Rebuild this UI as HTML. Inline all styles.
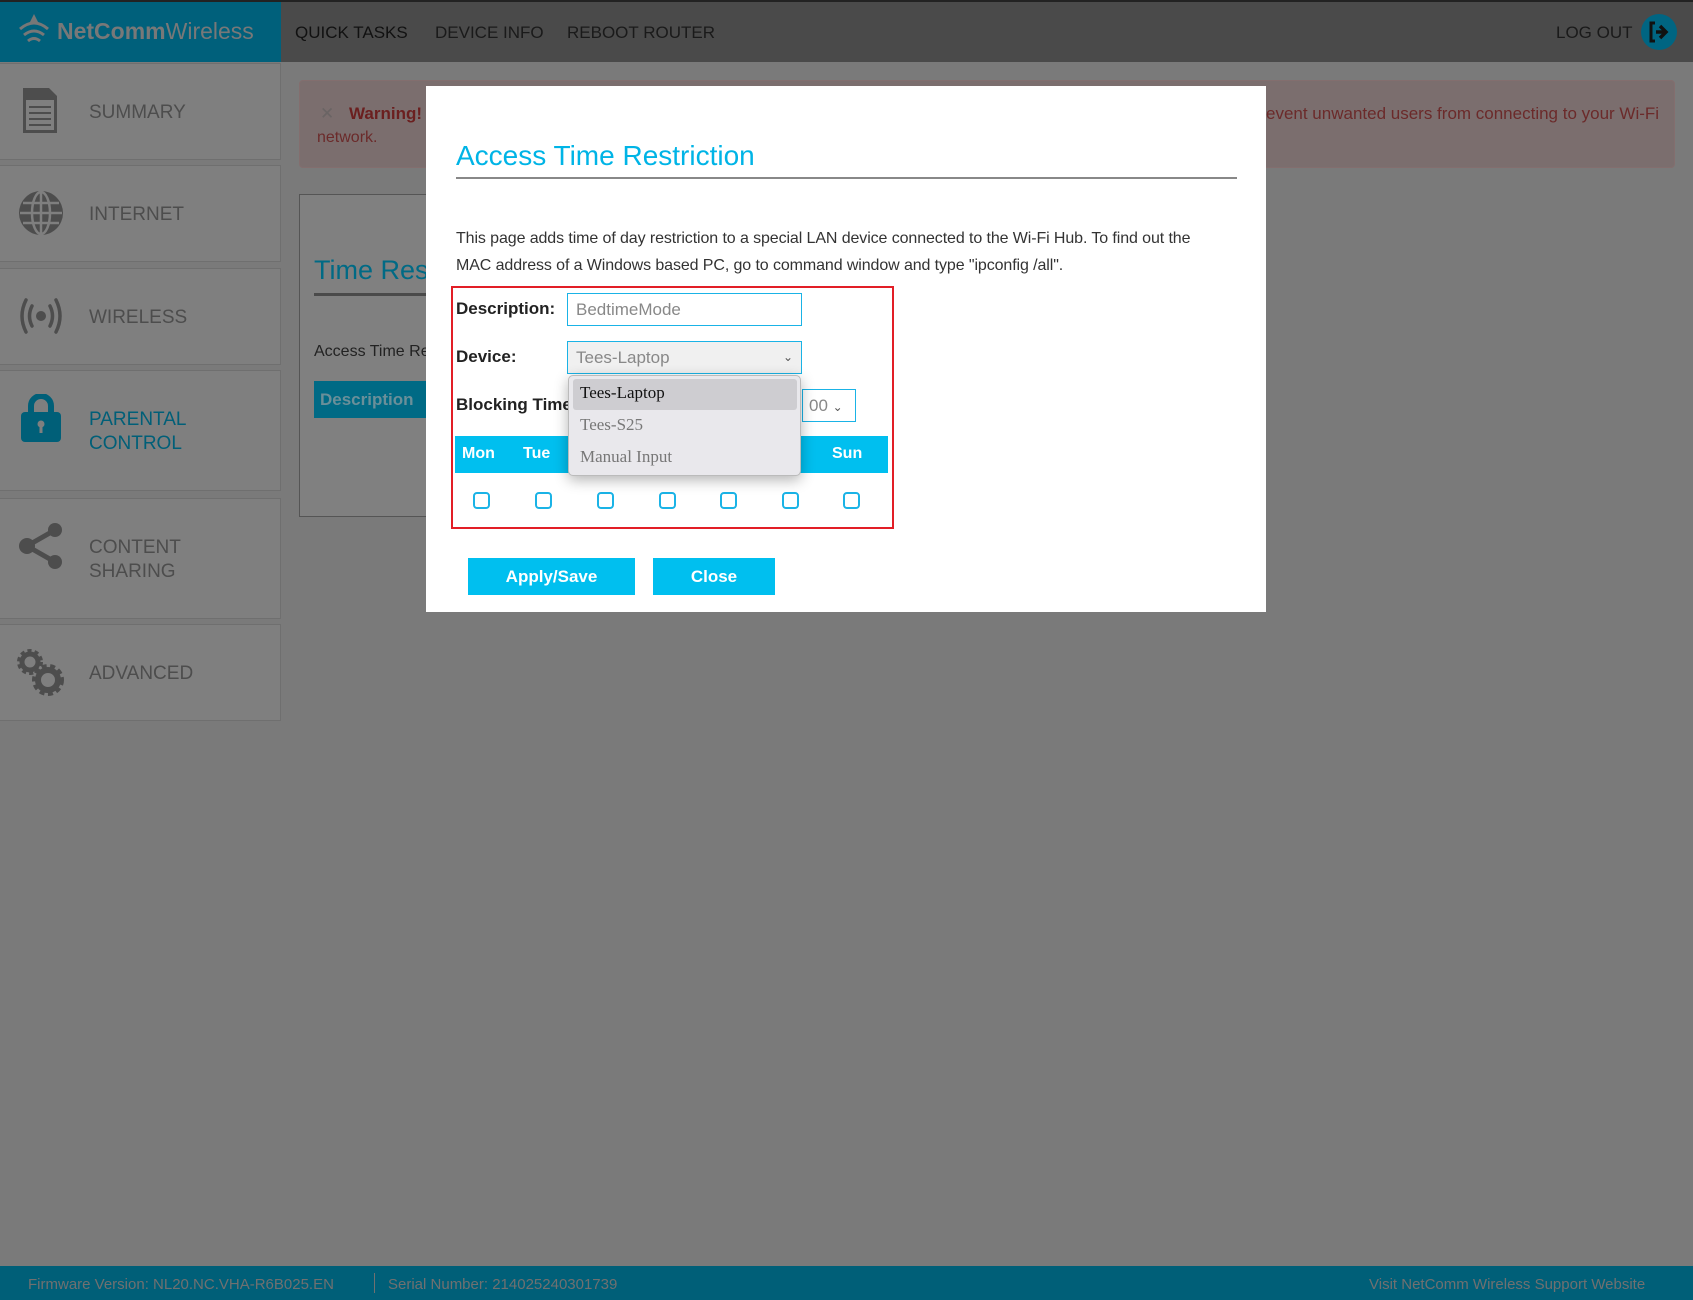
<!DOCTYPE html>
<html><head><meta charset="utf-8"><style>
*{box-sizing:border-box;margin:0;padding:0}
body{width:1693px;height:1300px;background:#7a7a7a;font-family:"Liberation Sans",sans-serif;position:relative;overflow:hidden}
.a{position:absolute}
.side{left:0;width:281px;background:#7f7f7f;border:1px solid #6f6f6f;border-left:none}
.side span{position:absolute;left:89px;font-size:19px;color:#4d4d4d;line-height:24px}
.day{position:absolute;top:0;color:#fff;font-weight:bold;font-size:16px;line-height:36px}
.cb{position:absolute;top:492px;width:17px;height:17px;border:2px solid #1ab3e6;border-radius:4px}
.btn{position:absolute;top:558px;height:37px;background:#00bfef;color:#fff;font-weight:bold;font-size:17px;text-align:center;line-height:37px}
</style></head><body>
<div class="a" style="left:0;top:0;width:1693px;height:2px;background:#222"></div>
<div class="a" style="left:0;top:2px;width:1693px;height:60px;background:#4a4a4a"></div>
<div class="a" style="left:0;top:2px;width:281px;height:60px;background:#00607b"></div>
<svg class="a" style="left:16px;top:13px" width="36" height="34" viewBox="0 0 36 34"><g fill="none" stroke="#777" stroke-width="3"><path d="M4 16 Q18 4 32 16"/><path d="M8 22 Q18 14 28 22"/><path d="M12 28 Q18 23 24 28"/></g><path d="M18 1 L14 9 H22Z" fill="#777"/></svg>
<div class="a" style="left:57px;top:17px;font-size:23px;color:#787878;line-height:28px"><b>NetComm</b>Wireless</div>
<div class="a" style="left:295px;top:22px;font-size:17px;color:#111;line-height:22px">QUICK TASKS</div>
<div class="a" style="left:435px;top:22px;font-size:17px;color:#1a1a1a;line-height:22px">DEVICE INFO</div>
<div class="a" style="left:567px;top:22px;font-size:17px;color:#1a1a1a;line-height:22px">REBOOT ROUTER</div>
<div class="a" style="left:1556px;top:22px;font-size:17px;color:#1a1a1a;line-height:22px">LOG OUT</div>
<div class="a" style="left:1641px;top:14px;width:36px;height:36px;border-radius:50%;background:#006582"></div>
<svg class="a" style="left:1647px;top:20px" width="24" height="24" viewBox="0 0 24 24"><path d="M8 3H4v18h4" fill="none" stroke="#111" stroke-width="3"/><path d="M9 12h8M13 6l6 6-6 6" fill="none" stroke="#111" stroke-width="3.5"/></svg>

<div class="a side" style="top:63px;height:97px"><span style="top:37px">SUMMARY</span></div>
<svg class="a" style="left:20px;top:86px" width="40" height="50" viewBox="0 0 40 50"><path d="M3 2h26l8 8v37H3z" fill="#4d4d4d"/><path d="M6 14h28v30H6z" fill="#7f7f7f"/><g stroke="#4d4d4d" stroke-width="2"><path d="M9 21h22M9 27h22M9 33h22M9 39h22"/></g></svg>
<div class="a side" style="top:165px;height:97px"><span style="top:37px">INTERNET</span></div>
<svg class="a" style="left:17px;top:189px" width="48" height="48" viewBox="0 0 48 48"><circle cx="24" cy="24" r="22" fill="#4d4d4d"/><g fill="none" stroke="#7f7f7f" stroke-width="2.5"><ellipse cx="24" cy="24" rx="9" ry="21"/><path d="M24 3v42M3 24h42M6 14h36M6 34h36"/></g></svg>
<div class="a side" style="top:268px;height:97px"><span style="top:37px">WIRELESS</span></div>
<svg class="a" style="left:17px;top:296px" width="48" height="40" viewBox="0 0 48 40"><circle cx="24" cy="20" r="5" fill="#4d4d4d"/><g fill="none" stroke="#4d4d4d" stroke-width="3.5" stroke-linecap="round"><path d="M15 10 Q10 20 15 30M33 10 Q38 20 33 30M9 4 Q1 20 9 36M39 4 Q47 20 39 36"/></g></svg>
<div class="a side" style="top:370px;height:121px"><span style="top:37px;color:#005f78">PARENTAL<br>CONTROL</span></div>
<svg class="a" style="left:20px;top:394px" width="42" height="50" viewBox="0 0 42 50"><path d="M11 20V12a10 10 0 0 1 20 0v8" fill="none" stroke="#005f78" stroke-width="6"/><rect x="1" y="18" width="40" height="30" rx="4" fill="#005f78"/><circle cx="21" cy="30" r="3.5" fill="#7f7f7f"/><rect x="19.5" y="30" width="3" height="9" fill="#7f7f7f"/></svg>
<div class="a side" style="top:498px;height:121px"><span style="top:37px">CONTENT<br>SHARING</span></div>
<svg class="a" style="left:17px;top:521px" width="48" height="50" viewBox="0 0 48 50"><g stroke="#4d4d4d" stroke-width="5"><path d="M10 25L38 9M10 25L38 41"/></g><circle cx="10" cy="25" r="8" fill="#4d4d4d"/><circle cx="38" cy="9" r="7" fill="#4d4d4d"/><circle cx="38" cy="41" r="7" fill="#4d4d4d"/></svg>
<div class="a side" style="top:624px;height:97px"><span style="top:37px">ADVANCED</span></div>
<svg class="a" style="left:16px;top:648px" width="50" height="50" viewBox="0 0 50 50"><g fill="none" stroke="#4d4d4d"><circle cx="14" cy="14" r="8" stroke-width="5"/><circle cx="14" cy="14" r="11" stroke-width="4" stroke-dasharray="4 3"/><circle cx="32" cy="32" r="10" stroke-width="6"/><circle cx="32" cy="32" r="14" stroke-width="4" stroke-dasharray="5 3.5"/></g></svg>

<div class="a" style="left:299px;top:80px;width:1376px;height:88px;background:#7b6e6e;border:1px solid #836e6e;border-radius:4px"></div>
<div class="a" style="left:320px;top:104px;font-size:17px;color:#6a6464">✕</div>
<div class="a" style="left:349px;top:104px;font-size:17px;color:#6b1f1f;font-weight:bold">Warning!</div>
<div class="a" style="left:1266px;top:104px;font-size:17px;color:#6b2a2a">event unwanted users from connecting to your Wi-Fi</div>
<div class="a" style="left:317px;top:129px;font-size:16px;color:#6b2a2a">network.</div>

<div class="a" style="left:299px;top:194px;width:140px;height:323px;background:#808080;border:1px solid #555"></div>
<div class="a" style="left:314px;top:255px;font-size:27px;color:#006a85">Time Rest</div>
<div class="a" style="left:314px;top:293px;width:130px;height:3px;background:#4a4a4a"></div>
<div class="a" style="left:314px;top:343px;font-size:16px;color:#222">Access Time Re</div>
<div class="a" style="left:314px;top:381px;width:130px;height:37px;background:#006a85;color:#6a8f99;font-size:17px;line-height:37px;padding-left:6px;font-weight:bold">Description</div>

<div class="a" style="left:0;top:1266px;width:1693px;height:34px;background:#005f78"></div>
<div class="a" style="left:28px;top:1276px;font-size:15px;color:#707070">Firmware Version: NL20.NC.VHA-R6B025.EN</div>
<div class="a" style="left:374px;top:1273px;width:1px;height:20px;background:#707070"></div>
<div class="a" style="left:388px;top:1276px;font-size:15px;color:#707070">Serial Number: 214025240301739</div>
<div class="a" style="left:1369px;top:1276px;font-size:15px;color:#707070">Visit NetComm Wireless Support Website</div>

<div class="a" style="left:426px;top:86px;width:840px;height:526px;background:#fff"></div>
<div class="a" style="left:456px;top:139px;font-size:28px;color:#00b4e6;line-height:34px">Access Time Restriction</div>
<div class="a" style="left:456px;top:177px;width:781px;height:2px;background:#888"></div>
<div class="a" style="left:456px;top:225px;font-size:16px;color:#333;line-height:27px;width:760px;letter-spacing:-0.1px">This page adds time of day restriction to a special LAN device connected to the Wi-Fi Hub. To find out the MAC address of a Windows based PC, go to command window and type "ipconfig /all".</div>
<div class="a" style="left:451px;top:286px;width:443px;height:243px;border:2px solid #e21e26"></div>
<div class="a" style="left:456px;top:299px;font-size:17px;color:#222;font-weight:bold">Description:</div>
<div class="a" style="left:567px;top:293px;width:235px;height:33px;border:1px solid #1ab3e6;font-size:17px;color:#888;line-height:31px;padding-left:8px">BedtimeMode</div>
<div class="a" style="left:456px;top:347px;font-size:17px;color:#222;font-weight:bold">Device:</div>
<div class="a" style="left:567px;top:341px;width:235px;height:33px;border:1px solid #1ab3e6;background:#f0f0f0;font-size:17px;color:#888;line-height:31px;padding-left:8px">Tees-Laptop<span style="position:absolute;right:8px;font-size:12px;color:#555">⌄</span></div>
<div class="a" style="left:456px;top:395px;font-size:17px;color:#222;font-weight:bold">Blocking Time</div>
<div class="a" style="left:802px;top:389px;width:54px;height:33px;border:1px solid #1ab3e6;font-size:17px;color:#888;line-height:31px;padding-left:6px">00 <span style="font-size:12px;color:#555">⌄</span></div>
<div class="a" style="left:455px;top:436px;width:433px;height:37px;background:#00bfef">
<span class="day" style="left:7px">Mon</span><span class="day" style="left:68px">Tue</span><span class="day" style="left:377px">Sun</span></div>
<div class="cb" style="left:473px"></div><div class="cb" style="left:535px"></div><div class="cb" style="left:597px"></div><div class="cb" style="left:659px"></div><div class="cb" style="left:720px"></div><div class="cb" style="left:782px"></div><div class="cb" style="left:843px"></div>
<div class="a" style="left:568px;top:375px;width:233px;height:101px;background:#e9e8ec;border:1px solid #bbb;border-radius:5px;box-shadow:0 4px 14px rgba(0,0,0,.3);font-family:'Liberation Serif',serif;font-size:17px">
<div class="a" style="left:4px;top:3px;width:224px;height:31px;background:#cecdd1;border-radius:3px"></div>
<div class="a" style="left:11px;top:7px;color:#111">Tees-Laptop</div>
<div class="a" style="left:11px;top:39px;color:#777">Tees-S25</div>
<div class="a" style="left:11px;top:71px;color:#777">Manual Input</div>
</div>
<div class="btn" style="left:468px;width:167px">Apply/Save</div>
<div class="btn" style="left:653px;width:122px">Close</div>
</body></html>
